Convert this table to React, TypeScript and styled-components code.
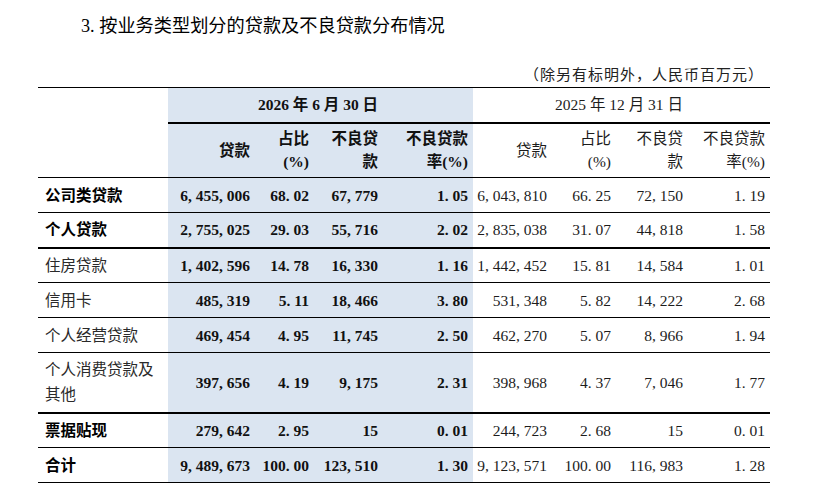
import styled, { createGlobalStyle } from "styled-components";

const GlobalStyle = createGlobalStyle`
  html, body {
    margin: 0;
    padding: 0;
    background: #ffffff;
  }
  body {
    font-family: "Liberation Serif", "Noto Sans CJK SC", serif;
    color: #111;
  }
`;

const Page = styled.div`
  width: 732px;
  padding: 17px 0 0 38px;
`;

const Title = styled.h2`
  margin: 0;
  padding-left: 43px;
  font-size: 18.2px;
  line-height: 18px;
  font-weight: 400;
  color: #000;
  font-family: "Liberation Serif", "Noto Sans CJK SC", serif;
`;

const Note = styled.div`
  margin-top: 32px;
  padding-right: 6px;
  text-align: right;
  font-size: 15px;
  line-height: 16px;
  letter-spacing: 1px;
  color: #222;
`;

const Table = styled.table`
  margin-top: 4px;
  width: 732px;
  table-layout: fixed;
  border-collapse: collapse;
  border-top: 1px solid #000;
  font-size: 15.5px;
`;

const Cell = styled.td<{ $shade?: boolean; $bold?: boolean; $center?: boolean }>`
  padding: 0 5px 0 0;
  text-align: ${(p) => (p.$center ? "center" : "right")};
  vertical-align: middle;
  white-space: nowrap;
  background: ${(p) => (p.$shade ? "#dbe5f1" : "transparent")};
  font-weight: ${(p) => (p.$bold ? 700 : 400)};
  color: ${(p) => (p.$bold ? "#111" : "#1c1c1c")};
  line-height: 23px;
`;

const HeadCell = styled(Cell).attrs({ as: "th" })<{ $rule?: number }>`
  border-bottom: ${(p) => (p.$rule ? `${p.$rule}px solid #000` : "none")};
`;

const Label = styled.td<{ $bold?: boolean }>`
  padding: 0 0 0 7px;
  text-align: left;
  vertical-align: middle;
  font-weight: ${(p) => (p.$bold ? 700 : 400)};
  color: ${(p) => (p.$bold ? "#000" : "#2a2a2a")};
  line-height: 25px;
`;

const Row = styled.tr<{ $h: number; $rule: number }>`
  height: ${(p) => p.$h}px;
  border-bottom: ${(p) => p.$rule}px solid #000;
`;

const HeadRow = styled.tr<{ $h: number }>`
  height: ${(p) => p.$h}px;
`;

const Punct = styled.span`
  display: inline-block;
  width: 0.5em;
  text-align: left;
`;

const Num = ({ v }: { v: string }) => (
  <>
    {v.split("").map((c, i) =>
      c === "," || c === "." ? <Punct key={i}>{c}</Punct> : <span key={i}>{c}</span>
    )}
  </>
);

interface LoanRow {
  label: string;
  bold: boolean;
  height: number;
  rule: number;
  cur: string[];
  prev: string[];
}

const rows: LoanRow[] = [
  { label: "公司类贷款", bold: true, height: 35, rule: 1, cur: ["6,455,006", "68.02", "67,779", "1.05"], prev: ["6,043,810", "66.25", "72,150", "1.19"] },
  { label: "个人贷款", bold: true, height: 35, rule: 2, cur: ["2,755,025", "29.03", "55,716", "2.02"], prev: ["2,835,038", "31.07", "44,818", "1.58"] },
  { label: "住房贷款", bold: false, height: 35, rule: 1, cur: ["1,402,596", "14.78", "16,330", "1.16"], prev: ["1,442,452", "15.81", "14,584", "1.01"] },
  { label: "信用卡", bold: false, height: 35, rule: 1, cur: ["485,319", "5.11", "18,466", "3.80"], prev: ["531,348", "5.82", "14,222", "2.68"] },
  { label: "个人经营贷款", bold: false, height: 35, rule: 1, cur: ["469,454", "4.95", "11,745", "2.50"], prev: ["462,270", "5.07", "8,966", "1.94"] },
  { label: "个人消费贷款及其他", bold: false, height: 60, rule: 2, cur: ["397,656", "4.19", "9,175", "2.31"], prev: ["398,968", "4.37", "7,046", "1.77"] },
  { label: "票据贴现", bold: true, height: 35, rule: 1, cur: ["279,642", "2.95", "15", "0.01"], prev: ["244,723", "2.68", "15", "0.01"] },
  { label: "合计", bold: true, height: 35, rule: 1, cur: ["9,489,673", "100.00", "123,510", "1.30"], prev: ["9,123,571", "100.00", "116,983", "1.28"] },
];

const widths = [130, 87, 59, 69, 90, 79, 64, 72, 82];

const headers = [
  <>贷款</>,
  <>占比<br />(%)</>,
  <>不良贷<br />款</>,
  <>不良贷款<br />率(%)</>,
];

const App = () => {
  return (
    <Page>
      <GlobalStyle />
      <Title>
        3<Punct>.</Punct>按业务类型划分的贷款及不良贷款分布情况
      </Title>
      <Note>（除另有标明外，人民币百万元）</Note>
      <Table>
        <colgroup>
          {widths.map((w, i) => (
            <col key={i} style={{ width: w }} />
          ))}
        </colgroup>
        <thead>
          <HeadRow $h={35}>
            <HeadCell rowSpan={2} $rule={1} />
            <HeadCell colSpan={4} $shade $bold $center $rule={2}>
              2026 年 6 月 30 日
            </HeadCell>
            <HeadCell colSpan={4} $center $rule={2}>
              2025 年 12 月 31 日
            </HeadCell>
          </HeadRow>
          <HeadRow $h={55}>
            {headers.map((h, i) => (
              <HeadCell key={`c${i}`} $shade $bold $rule={1}>
                {h}
              </HeadCell>
            ))}
            {headers.map((h, i) => (
              <HeadCell key={`p${i}`} $rule={1}>
                {h}
              </HeadCell>
            ))}
          </HeadRow>
        </thead>
        <tbody>
          {rows.map((r) => (
            <Row key={r.label} $h={r.height} $rule={r.rule}>
              <Label $bold={r.bold}>{r.label}</Label>
              {r.cur.map((v, i) => (
                <Cell key={`c${i}`} $shade $bold>
                  <Num v={v} />
                </Cell>
              ))}
              {r.prev.map((v, i) => (
                <Cell key={`p${i}`}>
                  <Num v={v} />
                </Cell>
              ))}
            </Row>
          ))}
        </tbody>
      </Table>
    </Page>
  );
};

export default App;
